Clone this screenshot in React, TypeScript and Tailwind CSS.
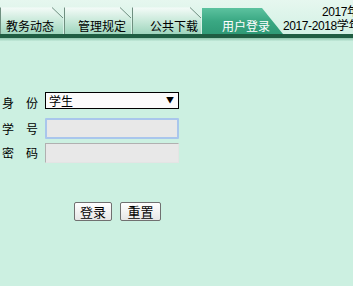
import { useState } from "react";

const cjk = "font-['Noto_Sans_CJK_SC','Noto_Sans',sans-serif]";

function Tab({
  label,
  width,
  textLeft,
  active,
}: {
  label: string;
  width: number;
  textLeft: number;
  active?: boolean;
}) {
  const fold = active ? 21 : 11;
  const id = active ? "tab-on" : "tab-off";
  return (
    <div className="relative h-[27px] shrink-0" style={{ width }}>
      <svg
        className="absolute inset-0"
        width={width}
        height={27}
        viewBox={`0 0 ${width} 27`}
      >
        <defs>
          <linearGradient id={id} x1="0" y1="0" x2="0" y2="1">
            {active ? (
              <>
                <stop offset="0" stopColor="#5cc29f" />
                <stop offset="0.5" stopColor="#3aa883" />
                <stop offset="1" stopColor="#2f9a76" />
              </>
            ) : (
              <>
                <stop offset="0" stopColor="#f4fbf8" />
                <stop offset="0.45" stopColor="#cdebdd" />
                <stop offset="1" stopColor="#9fd5bd" />
              </>
            )}
          </linearGradient>
        </defs>
        {active ? (
          <path
            d={`M0 1 H${width - fold} L${width} 27 H0 Z`}
            fill={`url(#${id})`}
          />
        ) : (
          <>
            <path
              d={`M0 0.5 H${width - fold - 1} L${width - 1} 11 V27 H0 Z`}
              fill={`url(#${id})`}
            />
            <path
              d={`M0.5 27 V0.5 M${width - fold - 1} 0.5 L${width - 1} 11`}
              stroke="#6f8f80"
              strokeWidth="1"
              fill="none"
            />
          </>
        )}
      </svg>
      <span
        className={`absolute bottom-[2px] text-[12px] leading-[13px] whitespace-nowrap ${
          active ? "text-white" : "text-black"
        }`}
        style={{ left: textLeft }}
      >
        {label}
      </span>
    </div>
  );
}

export default function App() {
  const [role, setRole] = useState("学生");

  return (
    <div
      className={`w-[353px] h-[286px] overflow-hidden bg-[#ccf0e1] ${cjk} text-black`}
    >
      <div className="flex h-[34px] items-end bg-gradient-to-b from-[#e6f7ef] to-[#d2f1e4]">
        <Tab label="教务动态" width={64} textLeft={6} />
        <Tab label="管理规定" width={68} textLeft={14} />
        <Tab label="公共下载" width={70} textLeft={18} />
        <Tab label="用户登录" width={81} textLeft={20} active />
        <div className="flex h-[34px] flex-col justify-end pb-[1px] text-[12px] leading-[14px] whitespace-nowrap font-['Liberation_Sans','Noto_Sans_CJK_SC',sans-serif] tracking-[-0.4px]">
          <span className="pl-[39px]">2017年秋季学期</span>
          <span>2017-2018学年第一学期</span>
        </div>
      </div>
      <div className="h-[4px] bg-[#1f5d42]" />
      <div className="h-[3px] bg-gradient-to-b from-[#8fc7ad] to-[#c4eadb]" />

      <div className="mt-[51px] flex flex-col text-[12px] leading-[12px]">
        <div className="flex items-start">
          <div className="flex w-[45px] gap-3 pl-[2px] pt-[5px]">
            <span>身</span>
            <span>份</span>
          </div>
          <div className="relative">
            <select
              value={role}
              onChange={(e) => setRole(e.target.value)}
              className="block h-[17px] w-[134px] appearance-none border border-black bg-[#fbfbfb] pl-[3px] text-[12px] leading-[15px] outline-none"
            >
              <option>学生</option>
              <option>教师</option>
            </select>
            <span className="pointer-events-none absolute right-[5px] top-[3px] text-[8px] leading-[10px]">
              ▼
            </span>
          </div>
        </div>

        <div className="mt-[9px] flex items-center">
          <div className="flex w-[45px] gap-3 pl-[2px]">
            <span>学</span>
            <span>号</span>
          </div>
          <input
            className="h-[21px] w-[134px] rounded-[1px] border-2 border-[#a9c6ec] bg-[#e8e8e8] px-1 text-[12px] outline-none"
          />
        </div>

        <div className="mt-[4px] flex items-center">
          <div className="flex w-[45px] gap-3 pl-[2px]">
            <span>密</span>
            <span>码</span>
          </div>
          <input
            type="password"
            disabled
            className="h-[20px] w-[134px] border border-t-[#b0b0b0] border-l-[#b0b0b0] border-r-[#e4e4e4] border-b-[#e4e4e4] bg-[#e8e8e8]"
          />
        </div>

        <div className="mt-[39px] flex gap-[8px] pl-[74px]">
          <button className="h-[19px] w-[38px] rounded-[2px] border border-[#707070] bg-gradient-to-b from-white to-[#e6e6e6] text-[13px] leading-[15px]">
            登录
          </button>
          <button className="h-[19px] w-[41px] rounded-[2px] border border-[#707070] bg-gradient-to-b from-white to-[#e6e6e6] text-[13px] leading-[15px]">
            重置
          </button>
        </div>
      </div>
    </div>
  );
}
